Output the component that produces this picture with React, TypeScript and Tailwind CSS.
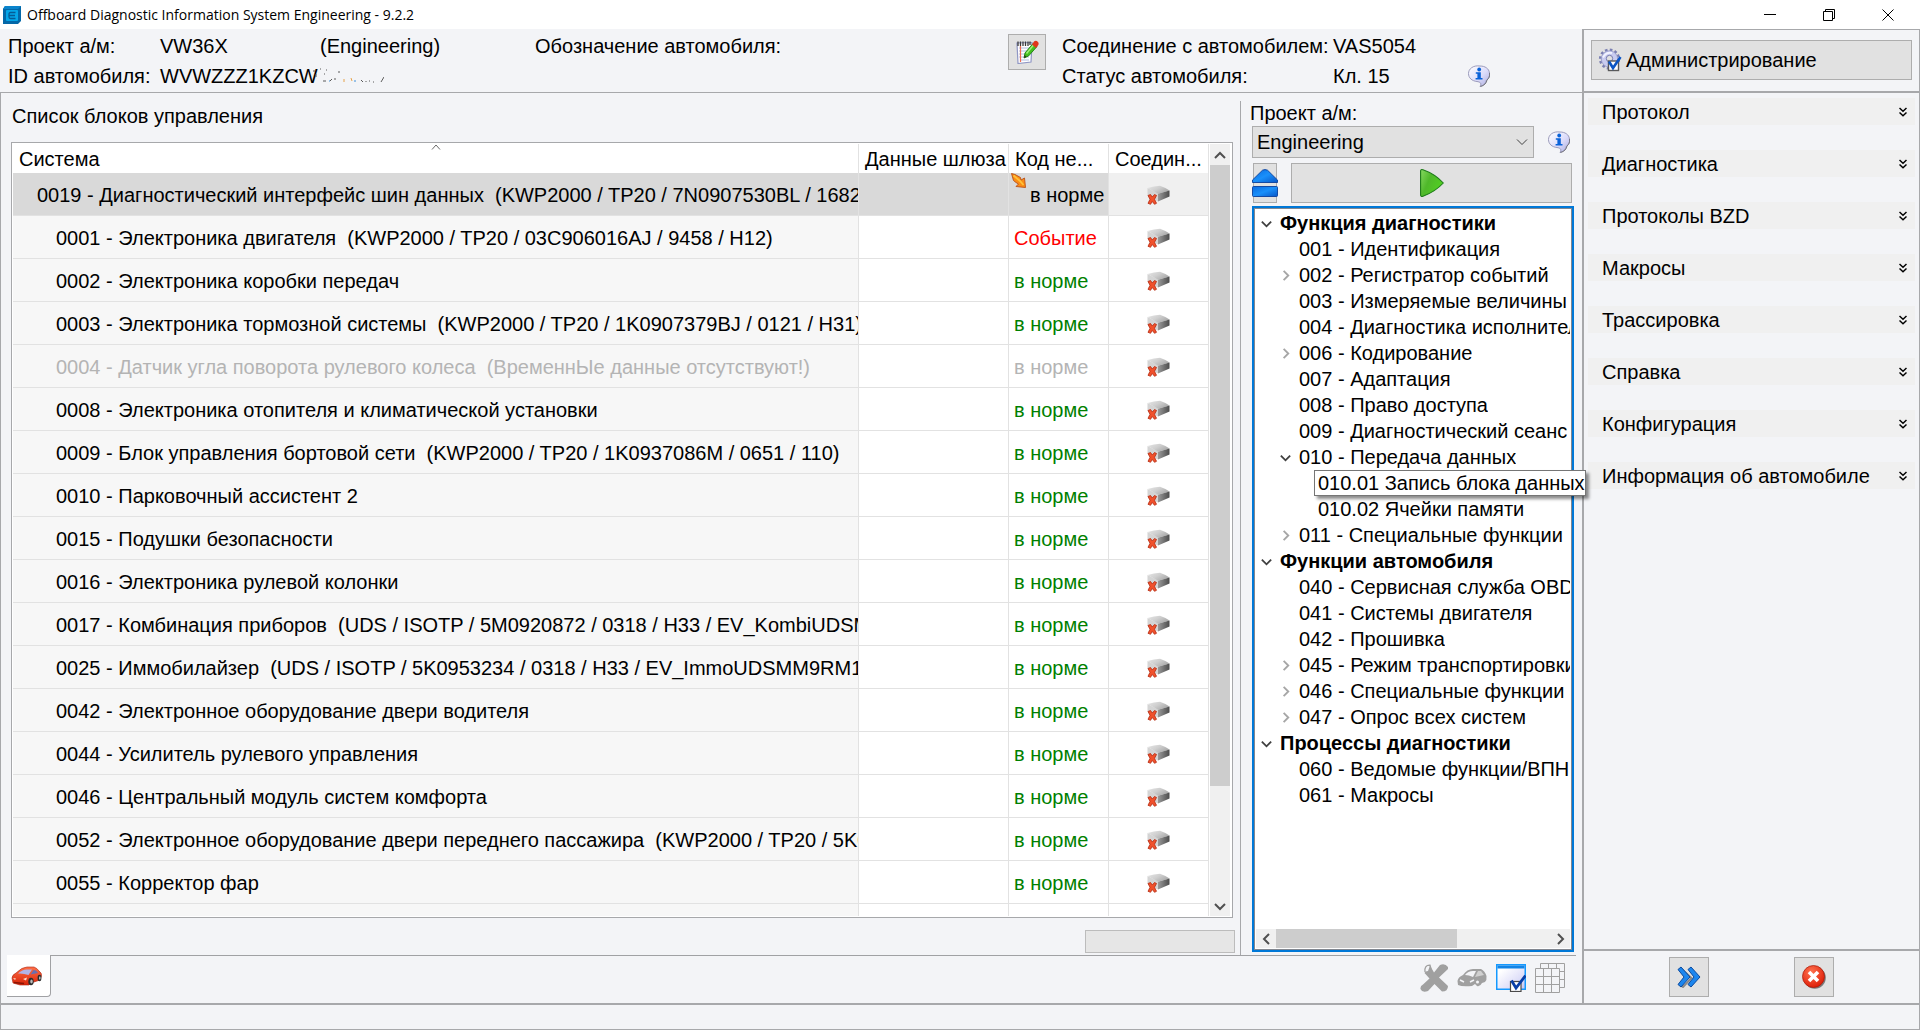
import { useState, type ReactNode } from "react";

type Status = "ok" | "event" | "off";
type Unit = { name: string; status: Status };

const units: Unit[] = [
  { name: "0019 - Диагностический интерфейс шин данных  (KWP2000 / TP20 / 7N0907530BL / 1682 /", status: "ok" },
  { name: "0001 - Электроника двигателя  (KWP2000 / TP20 / 03C906016AJ / 9458 / H12)", status: "event" },
  { name: "0002 - Электроника коробки передач", status: "ok" },
  { name: "0003 - Электроника тормозной системы  (KWP2000 / TP20 / 1K0907379BJ / 0121 / H31)", status: "ok" },
  { name: "0004 - Датчик угла поворота рулевого колеса  (ВременнЫе данные отсутствуют!)", status: "off" },
  { name: "0008 - Электроника отопителя и климатической установки", status: "ok" },
  { name: "0009 - Блок управления бортовой сети  (KWP2000 / TP20 / 1K0937086M / 0651 / 110)", status: "ok" },
  { name: "0010 - Парковочный ассистент 2", status: "ok" },
  { name: "0015 - Подушки безопасности", status: "ok" },
  { name: "0016 - Электроника рулевой колонки", status: "ok" },
  { name: "0017 - Комбинация приборов  (UDS / ISOTP / 5M0920872 / 0318 / H33 / EV_KombiUDSM", status: "ok" },
  { name: "0025 - Иммобилайзер  (UDS / ISOTP / 5K0953234 / 0318 / H33 / EV_ImmoUDSMM9RM10", status: "ok" },
  { name: "0042 - Электронное оборудование двери водителя", status: "ok" },
  { name: "0044 - Усилитель рулевого управления", status: "ok" },
  { name: "0046 - Центральный модуль систем комфорта", status: "ok" },
  { name: "0052 - Электронное оборудование двери переднего пассажира  (KWP2000 / TP20 / 5K0", status: "ok" },
  { name: "0055 - Корректор фар", status: "ok" },
];

type Node = { label: string; level: 0 | 1 | 2; state?: "open" | "closed"; tip?: boolean };

const tree: Node[] = [
  { label: "Функция диагностики", level: 0, state: "open" },
  { label: "001 - Идентификация", level: 1 },
  { label: "002 - Регистратор событий", level: 1, state: "closed" },
  { label: "003 - Измеряемые величины", level: 1 },
  { label: "004 - Диагностика исполнител", level: 1 },
  { label: "006 - Кодирование", level: 1, state: "closed" },
  { label: "007 - Адаптация", level: 1 },
  { label: "008 - Право доступа", level: 1 },
  { label: "009 - Диагностический сеанс", level: 1 },
  { label: "010 - Передача данных", level: 1, state: "open" },
  { label: "010.01 Запись блока данных", level: 2, tip: true },
  { label: "010.02 Ячейки памяти", level: 2 },
  { label: "011 - Специальные функции", level: 1, state: "closed" },
  { label: "Функции автомобиля", level: 0, state: "open" },
  { label: "040 - Сервисная служба OBD", level: 1 },
  { label: "041 - Системы двигателя", level: 1 },
  { label: "042 - Прошивка", level: 1 },
  { label: "045 - Режим транспортировки", level: 1, state: "closed" },
  { label: "046 - Специальные функции а", level: 1, state: "closed" },
  { label: "047 - Опрос всех систем", level: 1, state: "closed" },
  { label: "Процессы диагностики", level: 0, state: "open" },
  { label: "060 - Ведомые функции/ВПН", level: 1 },
  { label: "061 - Макросы", level: 1 },
];

const menu = [
  "Протокол",
  "Диагностика",
  "Протоколы BZD",
  "Макросы",
  "Трассировка",
  "Справка",
  "Конфигурация",
  "Информация об автомобиле",
];

const statusColor: Record<Status, string> = {
  ok: "text-[#008000]",
  event: "text-[#ff0000]",
  off: "text-[#b4b4b4]",
};

const levelPad = ["pl-1", "pl-[23px]", "pl-[42px]"];

function Chevron({ dir, className = "size-3.5" }: { dir: "up" | "down" | "left" | "right"; className?: string }) {
  const d = {
    up: "M2 10 L7 5 L12 10",
    down: "M2 5 L7 10 L12 5",
    left: "M10 2 L5 7 L10 12",
    right: "M5 2 L10 7 L5 12",
  }[dir];
  return (
    <svg viewBox="0 0 14 14" className={`shrink-0 ${className}`} fill="none" stroke="currentColor" strokeWidth="2">
      <path d={d} />
    </svg>
  );
}

function AppLogo() {
  return (
    <svg viewBox="0 0 18 18" className="size-[18px]">
      <path d="M2 0H18V15L15 18H0V3Z" fill="#0468a8" />
      <path d="M2 0H18L15 3H0Z" fill="#0a84cc" />
      <rect x="3" y="4" width="12" height="11" rx="1" fill="#05a6e8" />
      <path d="M12.500 6.500H7.500Q6 6.500 6 8V11Q6 12.500 7.500 12.500H12.500M6 9.500H12" fill="none" stroke="#055c96" strokeWidth="1.300" />
    </svg>
  );
}

function InfoIcon() {
  return (
    <svg viewBox="0 0 22 22" className="size-[22px] shrink-0">
      <defs>
        <linearGradient id="bubble" x1="0" y1="0" x2="1" y2="1">
          <stop offset="0" stopColor="#ffffff" />
          <stop offset="0.550" stopColor="#dcdcfa" />
          <stop offset="1" stopColor="#a9a9dc" />
        </linearGradient>
      </defs>
      <path d="M12 1C5 0 0.500 4 0.500 8.500C0.500 13 4 16 9 16.500C12 17 14 18 12 21.500C16 20.500 18 18 18.500 15C21 13.500 22 11 21.500 8C21 3.500 17 1 12 1Z" fill="url(#bubble)" stroke="#9292b4" strokeWidth="0.900" />
      <path d="M12.500 21.500C16.500 20.500 18.500 18 19 15C21 13.500 22 11 21.500 8" fill="none" stroke="#77777f" strokeWidth="1" />
      <circle cx="11.200" cy="4.500" r="1.900" fill="#0a62d8" />
      <path d="M7.800 7.300H12.800V13H14.500V14.500H7.600V13H9.400V8.800H7.800Z" fill="#0a62d8" />
    </svg>
  );
}

function NotebookIcon() {
  return (
    <svg viewBox="0 0 24 24" className="size-6">
      <path d="M2 3L17 2.500L16 22L3 23.500Z" fill="#ffffff" stroke="#8f96c4" strokeWidth="1.200" />
      <path d="M4 8H15M4 11H15M4 14H14M4 17H14M5 20H14" stroke="#a8b6e0" strokeWidth="0.900" />
      <path d="M5.500 6V22" stroke="#f06a50" strokeWidth="1.200" />
      <path d="M3 1.500V6M5.500 1.500V6M8 1.500V6M10.500 1.500V6M13 1.500V6M15 1.500V5" stroke="#3a3a3a" strokeWidth="1.300" />
      <path d="M18 3.500L22 6.500L13.500 16L9 18L10 13Z" fill="#45c020" stroke="#1d7f10" strokeWidth="0.900" />
      <path d="M18.500 5L11.500 13.500" stroke="#a4ef7c" strokeWidth="1.400" />
      <path d="M9 18L9.600 15L11.600 16.800Z" fill="#2c3a20" />
      <path d="M17 4.500L19 1.500Q21 0 23 2Q24.500 4 22.500 6L21 8Z" fill="#e0361c" />
    </svg>
  );
}

function GearIcon() {
  return (
    <svg viewBox="0 0 24 24" className="size-6">
      <circle cx="11.500" cy="11" r="9.300" fill="none" stroke="#7a7fb2" strokeWidth="2.600" strokeDasharray="2.600 2.270" />
      <circle cx="11.500" cy="11" r="8.200" fill="#c9ccf0" stroke="#8f93c4" strokeWidth="0.800" />
      <path d="M5 9.500Q8 4 14 5" fill="none" stroke="#f2f3ff" strokeWidth="2" />
      <circle cx="11.500" cy="10.500" r="3.200" fill="#e1e1e1" stroke="#767bb0" strokeWidth="1" />
      <rect x="10.500" y="13" width="10" height="9.500" fill="#ffffff" stroke="#5a5a5a" strokeWidth="1.400" />
      <path d="M11 13.500L15 20L22.500 9" fill="none" stroke="#0b55c4" strokeWidth="2.600" />
    </svg>
  );
}

function ModuleIcon() {
  return (
    <svg viewBox="0 0 23 20" className="h-5 w-[23px]">
      <defs>
        <linearGradient id="lid" x1="0" y1="0" x2="1" y2="0.600">
          <stop offset="0" stopColor="#e6e6e6" />
          <stop offset="0.500" stopColor="#cfcfcf" />
          <stop offset="1" stopColor="#a8a8a8" />
        </linearGradient>
        <linearGradient id="side" x1="0" y1="0" x2="1" y2="0">
          <stop offset="0" stopColor="#9a9a9a" />
          <stop offset="1" stopColor="#4c4c4c" />
        </linearGradient>
      </defs>
      <path d="M0.500 3L11 8.500V16.500L0.500 11Z" fill="#d4d4d4" />
      <path d="M0.500 3Q7 1 13 0.800Q18 2.500 22.500 5.500L11 8.800Z" fill="url(#lid)" />
      <path d="M11 8.800L22.500 5.500V11.500L11 16.500Z" fill="url(#side)" />
      <path d="M1 10.500L3.500 9.500L5.300 12L7.500 9.500L9.500 10.500L7.500 14.300L9.500 18.300L7.500 19.300L5.300 16.500L3.500 19.300L1 18.300L3 14.300Z" fill="#f0512c" stroke="#b42a10" strokeWidth="0.800" />
    </svg>
  );
}

function CornerArrow() {
  return (
    <svg viewBox="0 0 16 16" className="absolute left-0.5 top-0 size-4">
      <path d="M0.500 0.500L4 1.500L9.500 4.500L10 7L13.500 5L14.500 14.500L5 13.500L7.500 11L5 9.500L2.500 7.500Z" fill="#fb8c14" stroke="#b8501a" strokeWidth="0.900" />
      <path d="M2.500 2.500L9 8L12.500 12" stroke="#ffc23a" strokeWidth="1.800" fill="none" />
    </svg>
  );
}

function UpStackIcon() {
  return (
    <svg viewBox="0 0 26 28" className="h-7 w-[26px] shrink-0">
      <defs>
        <linearGradient id="blue" x1="0" y1="0" x2="1" y2="1">
          <stop offset="0" stopColor="#0a6ae0" />
          <stop offset="0.500" stopColor="#1a90fa" />
          <stop offset="1" stopColor="#0857c8" />
        </linearGradient>
      </defs>
      <path d="M0.500 11L10.500 1.200Q13 0 15.500 1.200L25.500 11V13.500H0.500Z" fill="url(#blue)" stroke="#0a3f9c" strokeWidth="0.900" />
      <rect x="0.500" y="17.500" width="25" height="10" rx="1" fill="url(#blue)" stroke="#0a3f9c" strokeWidth="0.900" />
    </svg>
  );
}

function PlayIcon() {
  return (
    <svg viewBox="0 0 24 28" className="h-7 w-6">
      <defs>
        <linearGradient id="green" x1="0" y1="0" x2="1" y2="0.500">
          <stop offset="0" stopColor="#86d860" />
          <stop offset="0.450" stopColor="#4fb82a" />
          <stop offset="1" stopColor="#52cf22" />
        </linearGradient>
      </defs>
      <path d="M0.600 2Q0.600 0 3 0.800Q15 5 23.300 14Q15 23 3 27.200Q0.600 28 0.600 26Z" fill="url(#green)" stroke="#1c7a18" strokeWidth="1.100" />
    </svg>
  );
}

function RedCar() {
  return (
    <svg viewBox="0 0 32 20" className="h-5 w-8">
      <defs>
        <linearGradient id="carbody" x1="0" y1="0" x2="0" y2="1">
          <stop offset="0" stopColor="#ff7048" />
          <stop offset="1" stopColor="#d82408" />
        </linearGradient>
      </defs>
      <path d="M1 12Q1 9 5 7Q11 1 16 1H23Q26 2 28 5Q31 7 30.500 10L29 14L20 17L18 19H9L2 17Z" fill="url(#carbody)" stroke="#a82410" strokeWidth="0.600" />
      <path d="M7 7.500Q12 3 16.500 3.500L21 3.500L17.500 9Q12 7 7 7.500Z" fill="#b0b4e8" />
      <path d="M22.500 4L25 4.500L27 7L19.500 8.500Z" fill="#6a6fb0" />
      <ellipse cx="20" cy="15.500" rx="2.700" ry="3.800" fill="#2c2c2c" />
      <ellipse cx="20.500" cy="15.500" rx="1.200" ry="2" fill="#bcbcbc" />
      <ellipse cx="28.500" cy="12" rx="1.900" ry="3.200" fill="#2c2c2c" />
      <ellipse cx="28.800" cy="12" rx="0.800" ry="1.700" fill="#bcbcbc" />
      <path d="M2 12L5 12.500L4 14ZM12 13L16 11.500L15 14.500Z" fill="#ffe0d0" />
      <path d="M3 16.500L13 17.500" stroke="#8c1404" strokeWidth="1.400" />
    </svg>
  );
}

function GreyCross() {
  return (
    <svg viewBox="0 0 28 28" className="size-7">
      <path d="M8 7L10 1.500L14 8.500L20 1Q25 -1 28 3V5L19 13.500L28 22Q28 27.500 22 27.500L14.500 20L8 27Q2 29 0.500 25Q0 22 3 20.500L9.500 14.500L4.500 9Q5 7 8 7Z" fill="#a0a0a0" />
      <path d="M5 8Q4 1 10 1.200L11 5" fill="none" stroke="#a0a0a0" strokeWidth="1.300" />
    </svg>
  );
}

function GreyCar() {
  return (
    <svg viewBox="0 0 30 20" className="h-5 w-[30px]">
      <path d="M0.500 13Q1 9 6 7Q10 1 16 1H24Q28 3 29.500 8Q30 12 28 14L25 15Q23 19 20 18L18 16L15 18Q5 19 1 17Z" fill="#a0a0a0" />
      <path d="M8 7Q11 3 16 3L19 3L16 9Q12 7 8 7Z" fill="#f3f4f7" />
      <path d="M21 3H24L27 7L18 9Z" fill="#d0d0d0" />
      <path d="M3 12L7 14M13 14L17 12" stroke="#f3f4f7" strokeWidth="1.600" />
      <circle cx="20.500" cy="14" r="1.500" fill="#f3f4f7" />
    </svg>
  );
}

function WindowCheck() {
  return (
    <svg viewBox="0 0 30 28" className="h-7 w-[30px]">
      <defs>
        <linearGradient id="pane" x1="0" y1="0" x2="1" y2="1">
          <stop offset="0.200" stopColor="#ffffff" />
          <stop offset="1" stopColor="#c8c8f4" />
        </linearGradient>
      </defs>
      <rect x="0.750" y="0.750" width="28.500" height="24.500" fill="url(#pane)" stroke="#1499ff" strokeWidth="1.500" />
      <rect x="1.500" y="1.500" width="27" height="3" fill="#1184e6" />
      <rect x="14.500" y="17.500" width="10.500" height="10" fill="#ffffff" stroke="#4a4a4a" strokeWidth="1.200" />
      <path d="M15.500 16.500L20 24L29.500 11.500" fill="none" stroke="#083fa8" strokeWidth="2.800" />
    </svg>
  );
}

function GridsIcon() {
  return (
    <svg viewBox="0 0 30 30" className="size-[30px]" fill="#f3f4f7" stroke="#a0a0a0">
      <path d="M5.500 0.500H29.500V24.500H5.500ZM13.500 0.500V24M21.500 0.500V24M5.500 8.500H29M5.500 16.500H29" />
      <path d="M0.500 5.500H24.500V29.500H0.500ZM8.500 5.500V29.500M16.500 5.500V29.500M0.500 13.500H24.500M0.500 21.500H24.500" />
    </svg>
  );
}

function ForwardIcon() {
  return (
    <svg viewBox="0 0 24 22" className="h-[22px] w-6">
      <path d="M4 2.500L14.500 12L6 21L3 19" fill="none" stroke="#8a8a8a" strokeWidth="2" />
      <path d="M1 3.500L4 1L13 11L4 21L1 18.500L7 11Z" fill="#1c86ee" stroke="#0b4a9e" strokeWidth="1" />
      <path d="M11 3.500L14 1L23 11L14 21L11 18.500L17 11Z" fill="#1c86ee" stroke="#0b4a9e" strokeWidth="1" />
    </svg>
  );
}

function CloseRound() {
  return (
    <svg viewBox="0 0 24 24" className="size-6">
      <defs>
        <radialGradient id="red" cx="0.400" cy="0.300" r="0.750">
          <stop offset="0" stopColor="#ff7350" />
          <stop offset="1" stopColor="#dd1a04" />
        </radialGradient>
      </defs>
      <circle cx="12.800" cy="12.800" r="11" fill="#7a7a7a" />
      <circle cx="11.500" cy="11.500" r="11" fill="url(#red)" stroke="#a51a08" strokeWidth="0.700" />
      <path d="M7 7L16 16M16 7L7 16" stroke="#ffffff" strokeWidth="3.600" />
    </svg>
  );
}

function DoubleDown() {
  return (
    <svg viewBox="0 0 8 10" className="h-2.5 w-2" fill="none" stroke="#000000" strokeWidth="1.500">
      <path d="M0.500 1L4 4.200L7.500 1M0.500 5.500L4 8.700L7.500 5.500" />
    </svg>
  );
}

function MaskedVin() {
  return (
    <svg viewBox="0 0 72 16" className="-ml-1.5 h-4 w-[72px]" stroke="#5a5a5a" strokeWidth="1" fill="none">
      <path d="M2 2v2M4 6v3M8 1h1M14 2h1M12 6h1M27 3v2M11 13h3M18 13l2-2M22 11h2M49 12l2 2M54 13v1M72 9l-3 5" />
      <path d="M32 11v3M39 10l1 3" stroke="#e6a24a" />
      <path d="M17 13h1M42 13h2" stroke="#3d8fd8" />
      <path d="M57 13h1M61 14h1" />
    </svg>
  );
}

function Btn({ label, className, children }: { label: string; className: string; children: ReactNode }) {
  return (
    <button type="button" aria-label={label} className={`flex items-center justify-center border border-[#adadad] bg-[#e1e1e1] ${className}`}>
      {children}
    </button>
  );
}

function TitleBar() {
  return (
    <div className="flex h-[29px] shrink-0 items-center bg-white pl-[3px] pr-[26px]">
      <AppLogo />
      <h1 className="ml-1.5 flex-1 font-['Open_Sans',sans-serif] text-[14px] leading-5">
        Offboard Diagnostic Information System Engineering - 9.2.2
      </h1>
      <div className="flex items-center gap-[47px]">
        <button type="button" aria-label="Свернуть">
          <svg viewBox="0 0 12 12" className="size-3" stroke="#000000">
            <path d="M0 5.500H12" />
          </svg>
        </button>
        <button type="button" aria-label="Восстановить">
          <svg viewBox="0 0 12 12" className="size-3" fill="none" stroke="#000000">
            <path d="M0.500 2.500H9.500V11.500H0.500ZM2.500 2.500V0.500H11.500V9.500H9.500" />
          </svg>
        </button>
        <button type="button" aria-label="Закрыть">
          <svg viewBox="0 0 12 12" className="size-3" stroke="#000000">
            <path d="M0.500 0.500L11.500 11.500M11.500 0.500L0.500 11.500" />
          </svg>
        </button>
      </div>
    </div>
  );
}

function VehicleHeader() {
  return (
    <header className="flex h-[64px] shrink-0 items-start border-b border-[#a7a8ab] pl-2 leading-[30px]">
      <dl className="grid grow grid-cols-[152px_160px_215px_1fr] pt-0.5">
        <dt>Проект а/м:</dt>
        <dd>VW36X</dd>
        <dd>(Engineering)</dd>
        <dt>Обозначение автомобиля:</dt>
        <dt>ID автомобиля:</dt>
        <dd className="col-span-3 flex items-center">
          WVWZZZ1KZCW
          <MaskedVin />
        </dd>
      </dl>
      <Btn label="Заметки" className="mt-[5px] h-9 w-[38px]">
        <NotebookIcon />
      </Btn>
      <dl className="grid w-[536px] grid-cols-[271px_135px_1fr] pl-4 pt-0.5">
        <dt>Соединение с автомобилем:</dt>
        <dd className="col-span-2">VAS5054</dd>
        <dt>Статус автомобиля:</dt>
        <dd>Кл. 15</dd>
        <dd className="flex items-center">
          <InfoIcon />
        </dd>
      </dl>
    </header>
  );
}

function UnitTable() {
  const [selected, setSelected] = useState(0);
  const head = "h-[29px] border-r border-[#e2e2e2] px-1.5 text-left font-normal";
  return (
    <div className="flex min-h-0 flex-1 border border-[#a7a8ab] bg-white p-px">
      <div className="min-w-0 flex-1 overflow-hidden">
        <table className="w-full table-fixed border-separate border-spacing-0 whitespace-pre leading-[26px]">
          <colgroup>
            <col />
            <col className="w-[150px]" />
            <col className="w-[100px]" />
            <col className="w-[100px]" />
          </colgroup>
          <thead>
            <tr>
              <th className={`${head} relative`}>
                Система
                <svg viewBox="0 0 10 6" className="absolute left-1/2 top-0 h-1.5 w-2.5 -translate-x-1/2" fill="none" stroke="#6a6a6a">
                  <path d="M1 5.500L5 1L9 5.500" />
                </svg>
              </th>
              <th className={head}>Данные шлюза</th>
              <th className={head}>Код не...</th>
              <th className={head}>Соедин...</th>
            </tr>
          </thead>
          <tbody>
            {units.map((u, i) => {
              const sel = i === selected;
              const cell = "h-[43px] border-b border-r border-[#e2e2e2] pt-0.5";
              return (
                <tr key={u.name} onClick={() => setSelected(i)}>
                  <td className={`${cell} overflow-hidden ${i === 0 ? "pl-6" : "pl-[43px]"} ${sel ? "bg-[#d9d9d9]" : "bg-[#f7f7f7]"} ${u.status === "off" ? "text-[#b4b4b4]" : ""}`}>
                    {u.name}
                  </td>
                  <td className={`${cell} ${sel ? "bg-[#d9d9d9]" : ""}`} />
                  <td className={`${cell} relative ${i === 0 ? "pl-[21px]" : "pl-[5px]"} ${sel ? "bg-[#d9d9d9]" : statusColor[u.status]}`}>
                    {i === 0 && <CornerArrow />}
                    {u.status === "event" ? "Событие" : "в норме"}
                  </td>
                  <td className={`${cell} ${sel ? "bg-[#f0f0f0]" : ""}`}>
                    <div className="flex justify-center">
                      <ModuleIcon />
                    </div>
                  </td>
                </tr>
              );
            })}
            <tr aria-hidden="true">
              <td className="h-[43px] border-r border-[#e2e2e2] bg-[#f7f7f7]" />
              <td className="border-r border-[#e2e2e2]" />
              <td className="border-r border-[#e2e2e2]" />
              <td className="border-r border-[#e2e2e2]" />
            </tr>
          </tbody>
        </table>
      </div>
      <div className="ml-px mr-px flex w-5 flex-col bg-[#f0f0f0] text-[#505050]">
        <button type="button" aria-label="Прокрутить вверх" className="flex h-[21px] items-center justify-center">
          <Chevron dir="up" />
        </button>
        <div className="flex-1">
          <div className="h-[85%] bg-[#cdcdcd]" />
        </div>
        <button type="button" aria-label="Прокрутить вниз" className="flex h-[21px] items-center justify-center">
          <Chevron dir="down" />
        </button>
      </div>
    </div>
  );
}

function FunctionTree() {
  return (
    <div className="mb-[3px] flex min-h-0 flex-1 flex-col border-2 border-[#0078d7] bg-white">
      <div className="flex min-h-0 flex-1 flex-col border border-[#828790] p-px">
        <ul role="tree" className="min-h-0 flex-1">
          {tree.map((n) => (
            <li key={n.label} role="treeitem" className={`flex h-[26px] items-center ${levelPad[n.level]}`}>
              <span className="flex w-5 shrink-0">
                {n.state === "open" && <Chevron dir="down" className="size-[13px] text-[#404040]" />}
                {n.state === "closed" && <Chevron dir="right" className="size-[13px] text-[#a6a6a6]" />}
              </span>
              {n.tip ? (
                <button
                  type="button"
                  className="relative z-10 -ml-1 flex h-[26px] shrink-0 items-center whitespace-nowrap border border-[#767676] bg-white pl-[3px] shadow-[3px_3px_3px_rgba(0,0,0,0.45)]"
                >
                  {n.label}
                </button>
              ) : (
                <button type="button" className={`min-w-0 overflow-hidden whitespace-nowrap text-left leading-[26px] ${n.level === 0 ? "font-bold" : ""}`}>
                  {n.label}
                </button>
              )}
            </li>
          ))}
        </ul>
        <div className="flex h-[19px] bg-[#f0f0f0] text-[#505050]">
          <button type="button" aria-label="Прокрутить влево" className="flex w-5 items-center justify-center">
            <Chevron dir="left" />
          </button>
          <div className="flex-1">
            <div className="h-full w-[66%] bg-[#cdcdcd]" />
          </div>
          <button type="button" aria-label="Прокрутить вправо" className="flex w-5 items-center justify-center">
            <Chevron dir="right" />
          </button>
        </div>
      </div>
    </div>
  );
}

function FunctionPanel() {
  return (
    <section className="flex w-[342px] shrink-0 flex-col border-l border-[#a7a8ab] pl-[11px] pr-2">
      <label htmlFor="project" className="-ml-0.5 leading-6">
        Проект а/м:
      </label>
      <div className="mt-px flex items-center gap-3.5 pr-1">
        <div className="relative flex-1">
          <select id="project" className="block h-8 w-full appearance-none border border-[#adadad] bg-[#e1e1e1] pl-1 leading-7">
            <option>Engineering</option>
          </select>
          <svg viewBox="0 0 12 8" className="pointer-events-none absolute right-1.5 top-3 h-2 w-3" fill="none" stroke="#404040">
            <path d="M1 1.500L6 6.500L11 1.500" />
          </svg>
        </div>
        <InfoIcon />
      </div>
      <div className="mb-[3px] mt-[5px] flex gap-3.5 pl-px pr-0.5">
        <Btn label="Свернуть всё" className="h-10 w-6">
          <UpStackIcon />
        </Btn>
        <Btn label="Запустить" className="h-10 flex-1">
          <PlayIcon />
        </Btn>
      </div>
      <FunctionTree />
    </section>
  );
}

function Sidebar() {
  return (
    <aside className="flex w-[338px] shrink-0 flex-col border-l-2 border-r border-[#a7a8ab]">
      <div className="h-16 shrink-0 border-b-2 border-t border-[#a7a8ab] px-[7px] pt-2.5">
        <button type="button" className="flex h-10 w-full items-center gap-1 border border-[#adadad] bg-[#e1e1e1] pl-1.5">
          <GearIcon />
          Администрирование
        </button>
      </div>
      <nav className="flex flex-1 flex-col gap-[25px] px-1 pt-[5px]">
        {menu.map((m) => (
          <button key={m} type="button" className="flex h-[27px] items-center justify-between bg-[#f0f0f0] pl-3.5 pr-2 text-left">
            {m}
            <DoubleDown />
          </button>
        ))}
      </nav>
      <div className="flex h-[54px] shrink-0 items-center gap-[85px] border-t-2 border-[#a7a8ab] pl-[85px]">
        <Btn label="Далее" className="size-10">
          <ForwardIcon />
        </Btn>
        <Btn label="Закрыть" className="size-10">
          <CloseRound />
        </Btn>
      </div>
    </aside>
  );
}

export default function App() {
  return (
    <div className="flex h-screen flex-col overflow-hidden bg-[#f3f4f7] font-['Liberation_Sans',Arial,sans-serif] text-[20px] text-black">
      <TitleBar />
      <div className="flex min-h-0 flex-1">
        <div className="flex min-w-0 flex-1 flex-col">
          <VehicleHeader />
          <main className="flex min-h-0 flex-1 flex-col border-l border-[#a7a8ab]">
            <div className="flex min-h-0 flex-1 pt-2">
              <section className="flex min-w-0 flex-1 flex-col pl-2.5 pr-[7px]">
                <h2 className="pb-3 pl-px pt-0.5 leading-[27px]">Список блоков управления</h2>
                <UnitTable />
                <progress aria-label="Ход выполнения" value={0} className="mb-0.5 -mr-0.5 mt-3 h-[23px] w-[150px] appearance-none self-end border border-[#bcbcbc] bg-[#e6e6e6] [&::-webkit-progress-bar]:bg-[#e6e6e6]" />
              </section>
              <FunctionPanel />
            </div>
            <div className="flex h-[48px] shrink-0 items-start px-1.5">
              <button type="button" aria-label="Автомобиль" className="flex h-[42px] w-11 items-center justify-center rounded-br-sm border-b border-r border-[#a0a1a4] bg-white pr-1">
                <RedCar />
              </button>
              <div className="flex flex-1 items-center justify-end gap-[9px] self-stretch border-t border-[#a0a1a4] pb-1 pr-[11px]">
                <button type="button" aria-label="Удалить"><GreyCross /></button>
                <button type="button" aria-label="Сброс автомобиля"><GreyCar /></button>
                <button type="button" aria-label="Выбор окна"><WindowCheck /></button>
                <button type="button" aria-label="Таблицы"><GridsIcon /></button>
              </div>
            </div>
          </main>
        </div>
        <Sidebar />
      </div>
      <footer className="h-[27px] shrink-0 border border-t-2 border-[#a7a8ab]" />
    </div>
  );
}
